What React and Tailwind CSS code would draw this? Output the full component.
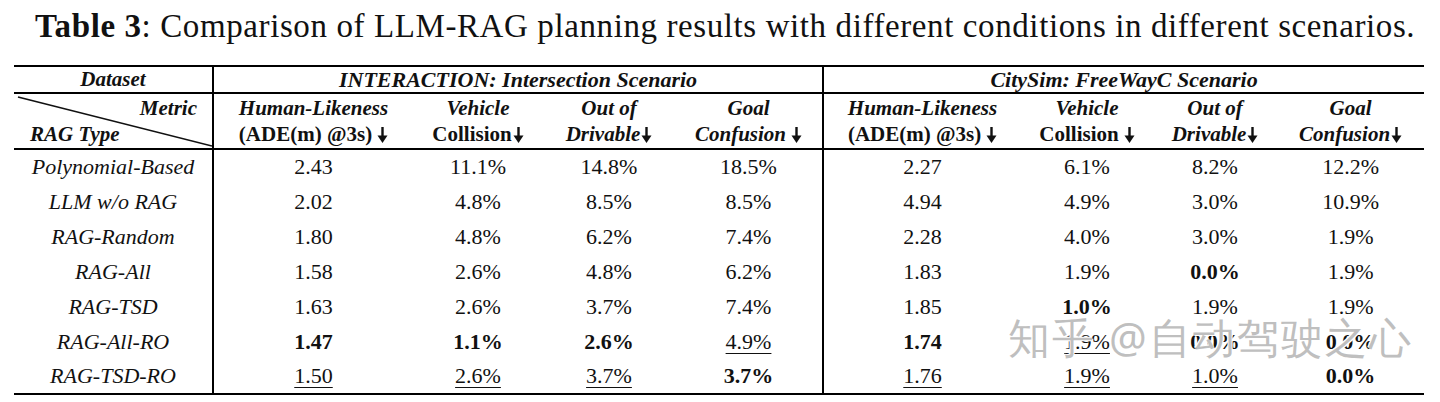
import React from 'react';

const rows = [
    ['Polynomial-Based', '2.43', '11.1%', '14.8%', '18.5%', '2.27', '6.1%', '8.2%', '12.2%'],
    ['LLM w/o RAG', '2.02', '4.8%', '8.5%', '8.5%', '4.94', '4.9%', '3.0%', '10.9%'],
    ['RAG-Random', '1.80', '4.8%', '6.2%', '7.4%', '2.28', '4.0%', '3.0%', '1.9%'],
    ['RAG-All', '1.58', '2.6%', '4.8%', '6.2%', '1.83', '1.9%', 'b:0.0%', '1.9%'],
    ['RAG-TSD', '1.63', '2.6%', '3.7%', '7.4%', '1.85', 'b:1.0%', '1.9%', '1.9%'],
    ['RAG-All-RO', 'b:1.47', 'b:1.1%', 'b:2.6%', 'u:4.9%', 'b:1.74', 'u:1.9%', 'b:0.0%', 'b:0.0%'],
    ['RAG-TSD-RO', 'u:1.50', 'u:2.6%', 'u:3.7%', 'b:3.7%', 'u:1.76', 'u:1.9%', 'u:1.0%', 'b:0.0%'],
];

// bold down arrow, like the one in the paper's header
function Down({ gap = false }) {
    return (
        <svg className={`inline-block align-[-2px] ${gap ? 'ml-[5px]' : 'ml-[1px]'}`} width="11" height="16" viewBox="0 0 11 16">
            <rect x="4.3" y="0" width="2.4" height="10" fill="#111" />
            <path d="M0.5 8.5 L10.5 8.5 L5.5 16 Z" fill="#111" />
        </svg>
    );
}

function Value({ v }) {
    if (v.startsWith('b:')) return <span className="font-bold">{v.slice(2)}</span>;
    if (v.startsWith('u:')) return <span className="underline decoration-1 underline-offset-[4px]">{v.slice(2)}</span>;
    return <span>{v}</span>;
}

function MetricHead({ top, bottom, bottomItalic = true, gap = false, divider = false }) {
    return (
        <th className={`font-bold text-[21px] leading-[26px] align-middle text-center whitespace-nowrap ${divider ? 'border-l-2 border-black' : ''}`}>
            <div className="italic">{top}</div>
            <div className={bottomItalic ? 'italic' : 'not-italic'}>{bottom}<Down gap={gap} /></div>
        </th>
    );
}

export default function App() {
    return (
        <div className="relative w-[1440px] h-[402px] bg-white overflow-hidden text-[#111] [font-family:Liberation_Serif,Times_New_Roman,serif]">
            <div className="h-[52px] flex items-center pl-[35px] text-[33px] tracking-[0.6px] leading-none whitespace-nowrap">
                <span className="font-bold">Table 3</span>
                <span>: Comparison of LLM-RAG planning results with different conditions in different scenarios.</span>
            </div>

            <table className="ml-[14px] mt-[13px] w-[1410px] table-fixed border-collapse border-y-2 border-black">
                <colgroup>
                    <col className="w-[199px]" />
                    <col className="w-[200px]" />
                    <col className="w-[130px]" />
                    <col className="w-[132px]" />
                    <col className="w-[148px]" />
                    <col className="w-[198px]" />
                    <col className="w-[132px]" />
                    <col className="w-[124px]" />
                    <col className="w-[147px]" />
                </colgroup>
                <thead>
                    <tr className="h-[27px] border-b-2 border-black font-bold italic">
                        <th className="text-center align-middle leading-none text-[21px]">Dataset</th>
                        <th colSpan={4} className="text-center align-middle leading-none text-[22px] border-l-2 border-black">INTERACTION: Intersection Scenario</th>
                        <th colSpan={4} className="text-center align-middle leading-none text-[22px] border-l-2 border-black">CitySim: FreeWayC Scenario</th>
                    </tr>
                    <tr className="h-[56px] border-b-2 border-black">
                        <th className="relative p-0 font-bold italic text-[21px] leading-[26px]">
                            <svg className="absolute inset-0 w-full h-full" preserveAspectRatio="none" viewBox="0 0 199 56">
                                <line x1="4" y1="3" x2="199" y2="54" stroke="#111" strokeWidth="1.6" />
                            </svg>
                            <div className="text-right pr-[15px]">Metric</div>
                            <div className="text-left pl-[16px]">RAG Type</div>
                        </th>
                        <MetricHead top="Human-Likeness" bottom="(ADE(m) @3s)" bottomItalic={false} gap divider />
                        <MetricHead top="Vehicle" bottom="Collision" bottomItalic={false} />
                        <MetricHead top="Out of" bottom="Drivable" />
                        <MetricHead top="Goal" bottom="Confusion" gap />
                        <MetricHead top="Human-Likeness" bottom="(ADE(m) @3s)" bottomItalic={false} gap divider />
                        <MetricHead top="Vehicle" bottom="Collision" bottomItalic={false} gap />
                        <MetricHead top="Out of" bottom="Drivable" />
                        <MetricHead top="Goal" bottom="Confusion" />
                    </tr>
                </thead>
                <tbody>
                    {rows.map((r, i) => (
                        <tr key={i} className="h-[35px] text-[22px] leading-none">
                            <td className="italic text-center">{r[0]}</td>
                            {r.slice(1).map((v, j) => (
                                <td key={j} className={`text-center ${j === 0 || j === 4 ? 'border-l-2 border-black' : ''}`}>
                                    <Value v={v} />
                                </td>
                            ))}
                        </tr>
                    ))}
                </tbody>
            </table>

            <div className="absolute left-[1008px] top-[316px] text-[42px] leading-none tracking-[2px] text-[#aaaaaa]/75 font-sans pointer-events-none whitespace-nowrap [text-shadow:1px_1px_0_#fff,-1px_-1px_0_#fff]">
                知乎 @自动驾驶之心
            </div>
        </div>
    );
}
